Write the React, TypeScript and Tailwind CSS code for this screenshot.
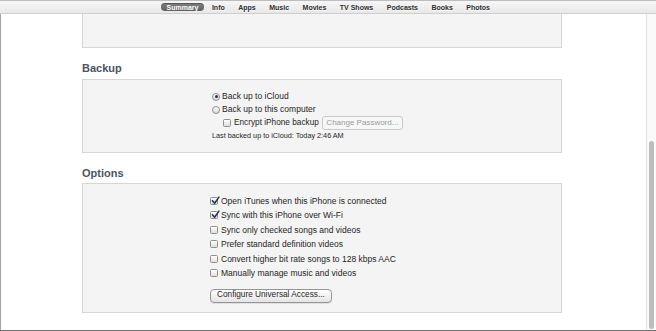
import React from "react";

const tabs = ["Summary", "Info", "Apps", "Music", "Movies", "TV Shows", "Podcasts", "Books", "Photos"];

function CheckBox({ checked = false }: { checked?: boolean }) {
  return (
    <span className="relative w-[8px] h-[8px] shrink-0 rounded-[1.5px] border border-[#8e8e8e] bg-gradient-to-b from-[#ffffff] to-[#dedede] shadow-[inset_0_1px_0_rgba(255,255,255,0.9)]">
      {checked && (
        <svg viewBox="0 0 10 10" className="absolute left-[-0.5px] top-[-2px] w-[9px] h-[9px]">
          <path d="M1.6 5.2 L4 8 L8.8 1.2" fill="none" stroke="#233252" strokeWidth="1.7" strokeLinecap="round" strokeLinejoin="round" />
        </svg>
      )}
    </span>
  );
}

function Radio({ checked = false }: { checked?: boolean }) {
  return (
    <span className="flex items-center justify-center w-[8px] h-[8px] shrink-0 rounded-full border border-[#8e8e8e] bg-gradient-to-b from-[#ffffff] to-[#d8d8d8]">
      {checked && <span className="w-[3px] h-[3px] rounded-full bg-[#2a2f3a]" />}
    </span>
  );
}

function Row({ checked, label }: { checked?: boolean; label: string }) {
  return (
    <div className="h-[14.5px] flex items-center gap-[3px]">
      <CheckBox checked={checked} />
      <span className="text-[8.5px] leading-none text-[#1e1e1e] whitespace-nowrap">{label}</span>
    </div>
  );
}

export default function App() {
  return (
    <div className="w-[656px] h-[331px] flex flex-col bg-white overflow-hidden border-b border-[#6f6f6f] font-['Liberation_Sans',Arial,sans-serif]">
      {/* Top tab bar */}
      <div className="h-[14px] shrink-0 flex items-center pl-[161px] gap-[2.5px] border-t border-[#bdbdbd] border-b border-b-[#cfcfcf] bg-gradient-to-b from-[#f6f6f6] to-[#e8e8e8]">
        {tabs.map((t, i) =>
          i === 0 ? (
            <span
              key={t}
              className="h-[8.5px] flex items-center px-[5.5px] rounded-full bg-gradient-to-b from-[#848484] to-[#5f5f5f] shadow-[inset_0_1px_1px_rgba(0,0,0,0.35)] text-[7px] font-bold text-white leading-none"
            >
              {t}
            </span>
          ) : (
            <span key={t} className="px-[5.5px] text-[7px] font-bold text-[#2e2e2e] leading-none [text-shadow:0_1px_0_rgba(255,255,255,0.8)]">
              {t}
            </span>
          )
        )}
      </div>

      <div className="flex-1 flex min-h-0">
        {/* Main */}
        <div className="flex-1 border-l border-[#a3a3a3] pl-[81px] flex flex-col">
          {/* First panel remnant */}
          <div className="w-[480px] h-[34px] shrink-0 bg-[#f4f4f4] border-x border-b border-[#d6d6d6]" />

          {/* Backup */}
          <div className="mt-[14px] h-[13px] leading-[13px] text-[11px] font-bold text-[#4a5364]">Backup</div>
          <div className="mt-[4px] w-[480px] h-[74px] shrink-0 bg-[#f4f4f4] border border-[#d6d6d6] pt-[10px] pl-[129px] flex flex-col">
            <div className="h-[13px] flex items-center gap-[2px]">
              <Radio checked />
              <span className="text-[8.5px] leading-none text-[#1e1e1e] whitespace-nowrap">Back up to iCloud</span>
            </div>
            <div className="h-[13px] flex items-center gap-[2px]">
              <Radio />
              <span className="text-[8.5px] leading-none text-[#1e1e1e] whitespace-nowrap">Back up to this computer</span>
            </div>
            <div className="h-[14px] flex items-center pl-[11px] gap-[3px]">
              <CheckBox />
              <span className="text-[8.25px] leading-none text-[#1e1e1e] whitespace-nowrap">Encrypt iPhone backup</span>
              <span className="h-[14px] flex items-center px-[3.5px] rounded-[3px] border border-[#c9c9c9] bg-[#f7f7f7] text-[8px] leading-none text-[#9a9a9a] whitespace-nowrap">
                Change Password...
              </span>
            </div>
            <div className="h-[12px] flex items-center">
              <span className="text-[7.25px] leading-none text-[#1e1e1e] whitespace-nowrap">Last backed up to iCloud: Today 2:46 AM</span>
            </div>
          </div>

          {/* Options */}
          <div className="mt-[14px] h-[13px] leading-[13px] text-[11px] font-bold text-[#4a5364]">Options</div>
          <div className="mt-[3px] w-[480px] h-[130px] shrink-0 bg-[#f4f4f4] border border-[#d6d6d6] pt-[9.5px] pl-[127px] flex flex-col">
            <Row checked label="Open iTunes when this iPhone is connected" />
            <Row checked label="Sync with this iPhone over Wi-Fi" />
            <Row label="Sync only checked songs and videos" />
            <Row label="Prefer standard definition videos" />
            <Row label="Convert higher bit rate songs to 128 kbps AAC" />
            <Row label="Manually manage music and videos" />
            <div className="mt-[8px] flex">
              <span className="h-[14px] flex items-center px-[6px] rounded-[4px] border border-[#959595] bg-gradient-to-b from-[#ffffff] to-[#e4e4e4] shadow-[0_1px_0_rgba(0,0,0,0.08)] text-[8.25px] leading-none text-[#1e1e1e] whitespace-nowrap">
                Configure Universal Access...
              </span>
            </div>
          </div>
        </div>

        {/* Scrollbar */}
        <div className="w-[10px] shrink-0 border-l border-[#e2e2e2] bg-[#fafafa] pt-[127px] pb-[1px] pl-[2px] pr-[2px] flex flex-col">
          <div className="flex-1 w-[5px] rounded-full bg-[#bdbdbd]" />
        </div>
      </div>
    </div>
  );
}
